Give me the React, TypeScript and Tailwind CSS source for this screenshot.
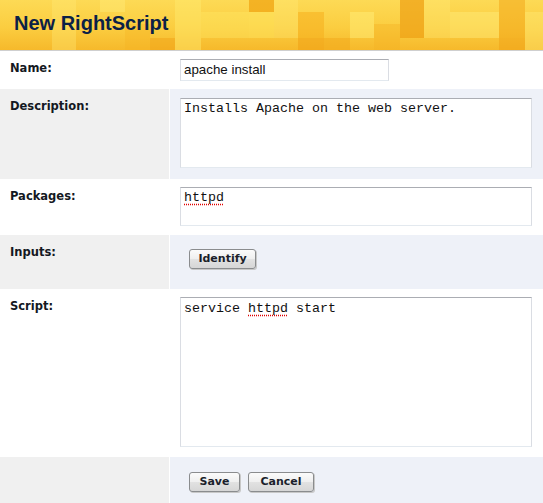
import React from "react";

const blocks: { x: number; y: number; w: number; h: number; c: string }[] = [
  { x: 52, y: 0, w: 24, h: 50, c: "rgba(255,236,120,0.35)" },
  { x: 150, y: 38, w: 25, h: 12, c: "rgba(240,160,20,0.45)" },
  { x: 175, y: 0, w: 26, h: 50, c: "rgba(255,235,110,0.45)" },
  { x: 201, y: 12, w: 48, h: 26, c: "rgba(255,232,100,0.4)" },
  { x: 249, y: 0, w: 25, h: 12, c: "rgba(240,165,20,0.75)" },
  { x: 249, y: 12, w: 25, h: 26, c: "rgba(255,232,100,0.45)" },
  { x: 274, y: 0, w: 24, h: 38, c: "rgba(255,236,120,0.35)" },
  { x: 298, y: 12, w: 26, h: 26, c: "rgba(245,175,30,0.55)" },
  { x: 298, y: 38, w: 26, h: 12, c: "rgba(240,160,20,0.55)" },
  { x: 324, y: 38, w: 26, h: 12, c: "rgba(242,168,25,0.5)" },
  { x: 350, y: 12, w: 24, h: 26, c: "rgba(255,238,120,0.5)" },
  { x: 374, y: 24, w: 26, h: 26, c: "rgba(245,178,35,0.4)" },
  { x: 400, y: 0, w: 24, h: 38, c: "rgba(238,160,20,0.7)" },
  { x: 424, y: 0, w: 26, h: 38, c: "rgba(255,236,120,0.35)" },
  { x: 450, y: 12, w: 49, h: 26, c: "rgba(255,238,125,0.45)" },
  { x: 499, y: 0, w: 26, h: 38, c: "rgba(242,168,25,0.55)" },
  { x: 499, y: 38, w: 26, h: 12, c: "rgba(240,160,20,0.5)" },
  { x: 525, y: 12, w: 18, h: 38, c: "rgba(255,236,120,0.4)" },
  { x: 100, y: 0, w: 25, h: 12, c: "rgba(255,238,125,0.4)" },
  { x: 125, y: 24, w: 25, h: 26, c: "rgba(245,175,30,0.3)" },
];

const boxCls =
  "bg-white border border-t-[#abadb3] border-x-[#dadde3] border-b-[#e3e9ef] font-['Liberation_Mono',monospace] text-[13.33px] leading-[15px] text-[#111] pl-[3px] pt-[2px]";

const btnCls =
  "h-[20px] rounded-[3px] border border-[#8a8c8e] bg-[linear-gradient(to_bottom,#fbfbfb,#efefef_50%,#e2e2e2_51%,#d6d6d6)] shadow-[1px_1px_0_#c8c8c8] text-[11px] font-bold text-[#1b1f2b] font-['DejaVu_Sans',sans-serif] flex items-center justify-center";

function Spell({ children }: { children: React.ReactNode }) {
  return (
    <span className="underline decoration-dotted decoration-[#e00000] underline-offset-[3px]">
      {children}
    </span>
  );
}

function Label({ text }: { text: string }) {
  return (
    <div className="pl-[10px] pt-[10px] text-[11.5px] leading-[14px] font-bold text-[#141822]">
      {text}
    </div>
  );
}

export default function App() {
  return (
    <div className="w-[543px] h-[503px] bg-white overflow-hidden flex flex-col font-['DejaVu_Sans',sans-serif]">
      <div className="relative h-[51px] shrink-0 border-b border-[#cfcfcf] bg-[linear-gradient(to_bottom,#fdda55,#fbcd40_55%,#f6b92b)] overflow-hidden">
        {blocks.map((b, i) => (
          <div
            key={i}
            className="absolute"
            style={{ left: b.x, top: b.y, width: b.w, height: b.h, background: b.c }}
          />
        ))}
        <div className="relative pl-[14px] pt-[11px] text-[20px] leading-[24px] font-bold text-[#0b2147] font-['Liberation_Sans',Arial,sans-serif]">
          New RightScript
        </div>
      </div>

      {/* Name */}
      <div className="flex h-[38px] shrink-0 bg-white">
        <div className="w-[170px] shrink-0">
          <Label text="Name:" />
        </div>
        <div className="flex-1 pl-[10px] pt-[8px]">
          <div className="w-[209px] h-[22px] bg-white border border-t-[#abadb3] border-x-[#dadde3] border-b-[#e3e9ef] pl-[3px] flex items-center text-[13.33px] text-[#111] font-['Liberation_Sans',Arial,sans-serif]">
            apache install
          </div>
        </div>
      </div>

      {/* Description */}
      <div className="flex h-[90px] shrink-0">
        <div className="w-[169px] shrink-0 bg-[#f0f0f0]">
          <Label text="Description:" />
        </div>
        <div className="flex-1 ml-[1px] bg-[#eef1f8] pl-[10px] pr-[11px] pt-[9px]">
          <div className={`${boxCls} h-[70px]`}>Installs Apache on the web server.</div>
        </div>
      </div>

      {/* Packages */}
      <div className="flex h-[56px] shrink-0 bg-white">
        <div className="w-[170px] shrink-0">
          <Label text="Packages:" />
        </div>
        <div className="flex-1 pl-[10px] pr-[11px] pt-[8px]">
          <div className={`${boxCls} h-[39px]`}>
            <Spell>httpd</Spell>
          </div>
        </div>
      </div>

      {/* Inputs */}
      <div className="flex h-[54px] shrink-0">
        <div className="w-[169px] shrink-0 bg-[#f0f0f0]">
          <Label text="Inputs:" />
        </div>
        <div className="flex-1 ml-[1px] bg-[#eef1f8] pl-[19px] pt-[14px]">
          <div className={`${btnCls} w-[67px]`}>Identify</div>
        </div>
      </div>

      {/* Script */}
      <div className="flex h-[168px] shrink-0 bg-white">
        <div className="w-[170px] shrink-0">
          <Label text="Script:" />
        </div>
        <div className="flex-1 pl-[10px] pr-[11px] pt-[8px]">
          <div className={`${boxCls} h-[150px] pt-[3px]`}>
            service <Spell>httpd</Spell> start
          </div>
        </div>
      </div>

      {/* Buttons */}
      <div className="flex flex-1">
        <div className="w-[169px] shrink-0 bg-[#f0f0f0]" />
        <div className="flex-1 ml-[1px] bg-[#eef1f8] pl-[19px] pt-[15px] flex items-start gap-[8px]">
          <div className={`${btnCls} w-[51px]`}>Save</div>
          <div className={`${btnCls} w-[66px]`}>Cancel</div>
        </div>
      </div>
    </div>
  );
}
